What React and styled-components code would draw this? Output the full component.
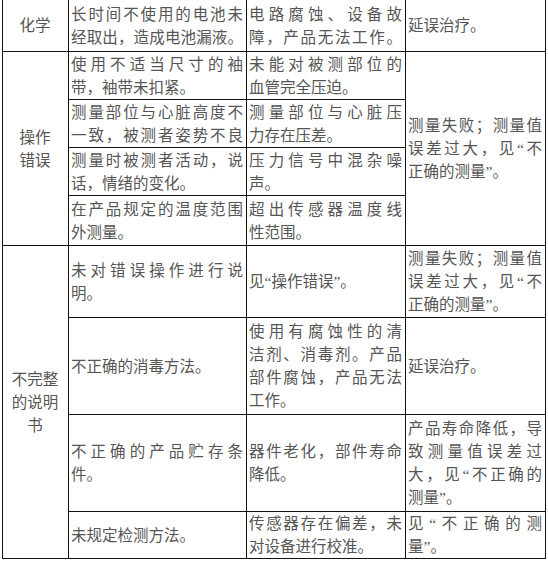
import styled, { createGlobalStyle } from "styled-components";

const GlobalStyle = createGlobalStyle`
  html, body {
    margin: 0;
    padding: 0;
    background: #fff;
  }
`;

// each cell: lines as they break in the original; every line but the last is
// stretched to the cell width, `fill` stretches the last one too
const cells = [
  { col: 1, row: 1, center: true, lines: ["化学"] },
  { col: 2, row: 1, fill: true, lines: ["长时间不使用的电池未", "经取出，造成电池漏液。"] },
  { col: 3, row: 1, fill: true, lines: ["电路腐蚀、设备故", "障，产品无法工作。"] },
  { col: 4, row: 1, lines: ["延误治疗。"] },

  { col: 1, row: 2, span: 4, center: true, lines: ["操作", "错误"] },
  { col: 2, row: 2, lines: ["使用不适当尺寸的袖", "带，袖带未扣紧。"] },
  { col: 3, row: 2, lines: ["未能对被测部位的", "血管完全压迫。"] },
  { col: 2, row: 3, fill: true, lines: ["测量部位与心脏高度不", "一致，被测者姿势不良"] },
  { col: 3, row: 3, lines: ["测量部位与心脏压", "力存在压差。"] },
  { col: 2, row: 4, lines: ["测量时被测者活动，说", "话，情绪的变化。"] },
  { col: 3, row: 4, lines: ["压力信号中混杂噪", "声。"] },
  { col: 2, row: 5, lines: ["在产品规定的温度范围", "外测量。"] },
  { col: 3, row: 5, lines: ["超出传感器温度线", "性范围。"] },
  { col: 4, row: 2, span: 4, lines: ["测量失败；测量值", "误差过大，见“不", "正确的测量”。"] },

  { col: 1, row: 6, span: 4, center: true, lines: ["不完整", "的说明", "书"] },
  { col: 2, row: 6, lines: ["未对错误操作进行说", "明。"] },
  { col: 3, row: 6, lines: ["见“操作错误”。"] },
  { col: 4, row: 6, lines: ["测量失败；测量值", "误差过大，见“不", "正确的测量”。"] },
  { col: 2, row: 7, lines: ["不正确的消毒方法。"] },
  { col: 3, row: 7, lines: ["使用有腐蚀性的清", "洁剂、消毒剂。产品", "部件腐蚀，产品无法", "工作。"] },
  { col: 4, row: 7, lines: ["延误治疗。"] },
  { col: 2, row: 8, lines: ["不正确的产品贮存条", "件。"] },
  { col: 3, row: 8, lines: ["器件老化，部件寿命", "降低。"] },
  { col: 4, row: 8, lines: ["产品寿命降低，导", "致测量值误差过", "大，见“不正确的", "测量”。"] },
  { col: 2, row: 9, lines: ["未规定检测方法。"] },
  { col: 3, row: 9, lines: ["传感器存在偏差，未", "对设备进行校准。"] },
  { col: 4, row: 9, lines: ["见“不正确的测", "量”。"] },
];

const App = () => {
  return (
    <>
      <GlobalStyle />
      <Table lang="zh-CN">
        {cells.map((c, i) => (
          <Cell key={i} $col={c.col} $row={c.row} $span={c.span} $center={c.center}>
            {c.lines.map((line, j) => (
              <Line key={j} $fill={!c.center && (j < c.lines.length - 1 || c.fill)}>
                {line}
              </Line>
            ))}
          </Cell>
        ))}
      </Table>
    </>
  );
};
export default App;

const Table = styled.div`
  display: grid;
  grid-template-columns: 66px 178px 159px 140px;
  grid-template-rows: 52px 48px 48px 48px 50px 72px 97px 97px 47px;
  width: max-content;
  margin-left: 2px;
  border-left: 1px solid #111;
  font-family: "Liberation Serif", "Noto Sans CJK SC", serif;
  font-size: 15.5px;
  color: #555;
`;

const Cell = styled.div`
  grid-column: ${(p) => p.$col};
  grid-row: ${(p) => p.$row} / span ${(p) => p.$span || 1};
  box-sizing: border-box;
  display: flex;
  flex-direction: column;
  justify-content: center;
  padding: 0 3px 0 2px;
  border-right: 1px solid #111;
  border-bottom: 1px solid #111;
  text-align: ${(p) => (p.$center ? "center" : "left")};
  overflow: hidden;
`;

const Line = styled.div`
  line-height: 23px;
  text-align: ${(p) => (p.$fill ? "justify" : "inherit")};
  text-align-last: ${(p) => (p.$fill ? "justify" : "auto")};
`;
